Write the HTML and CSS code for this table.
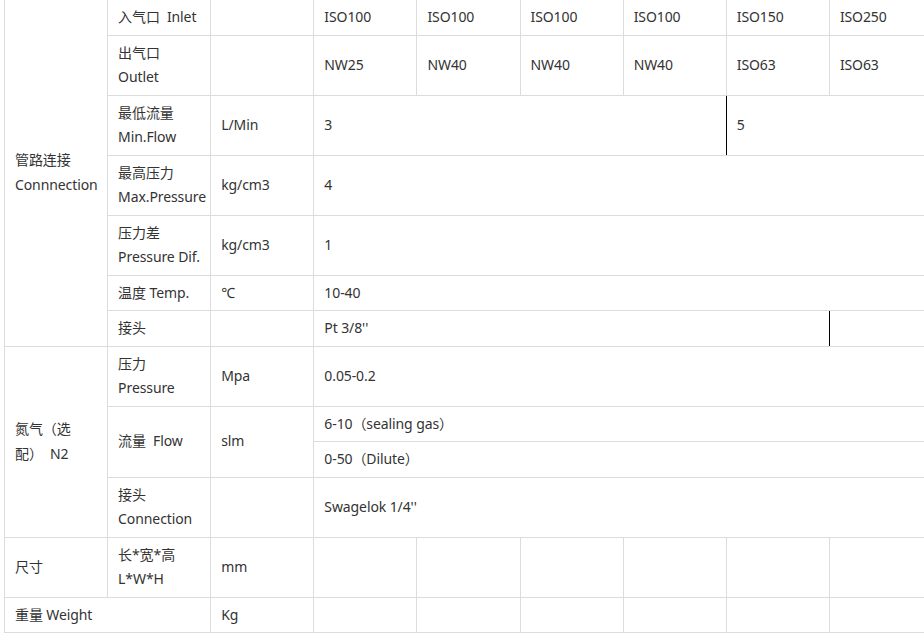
FILE: index.html
```html
<!DOCTYPE html>
<html lang="zh-CN">
<head>
<meta charset="utf-8">
<title>规格参数</title>
<link rel="stylesheet" href="styles.css">
</head>
<body>
<div class="wrap">
<table class="spec">
<tbody>
<tr>
<td rowspan="7" class="grp">管路连接<br>Connnection</td>
<td>入气口&nbsp; Inlet</td>
<td></td>
<td>ISO100</td>
<td>ISO100</td>
<td>ISO100</td>
<td>ISO100</td>
<td>ISO150</td>
<td>ISO250</td>
</tr>
<tr>
<td>出气口<br>Outlet</td>
<td></td>
<td>NW25</td>
<td>NW40</td>
<td>NW40</td>
<td>NW40</td>
<td>ISO63</td>
<td>ISO63</td>
</tr>
<tr>
<td>最低流量<br>Min.Flow</td>
<td>L/Min</td>
<td colspan="4" class="edge">3</td>
<td colspan="2">5</td>
</tr>
<tr>
<td>最高压力<br>Max.Pressure</td>
<td>kg/cm3</td>
<td colspan="6">4</td>
</tr>
<tr>
<td>压力差<br>Pressure Dif.</td>
<td>kg/cm3</td>
<td colspan="6">1</td>
</tr>
<tr>
<td>温度 Temp.</td>
<td>℃</td>
<td colspan="6">10-40</td>
</tr>
<tr>
<td>接头</td>
<td></td>
<td colspan="5" class="edge">Pt 3/8''</td>
<td></td>
</tr>
<tr>
<td rowspan="4" class="grp">氮气（选配）&nbsp; N2</td>
<td>压力<br>Pressure</td>
<td>Mpa</td>
<td colspan="6">0.05-0.2</td>
</tr>
<tr>
<td rowspan="2">流量&nbsp; Flow</td>
<td rowspan="2">slm</td>
<td colspan="6">6-10（sealing gas）</td>
</tr>
<tr>
<td colspan="6">0-50（Dilute）</td>
</tr>
<tr>
<td>接头<br>Connection</td>
<td></td>
<td colspan="6">Swagelok 1/4''</td>
</tr>
<tr>
<td class="grp">尺寸</td>
<td>长*宽*高<br>L*W*H</td>
<td>mm</td>
<td></td>
<td></td>
<td></td>
<td></td>
<td></td>
<td></td>
</tr>
<tr>
<td colspan="2">重量 Weight</td>
<td>Kg</td>
<td></td>
<td></td>
<td></td>
<td></td>
<td></td>
<td></td>
</tr>
</tbody>
</table>
</div>
</body>
</html>
```
FILE: styles.css
```css
html, body {
  margin: 0;
  padding: 0;
  background: #fff;
}

body {
  overflow: hidden;
  font-family: "Noto Sans", "Noto Sans CJK SC", sans-serif;
  font-size: 14px;
  color: #333;
}

.wrap {
  width: 100%;
  overflow: hidden;
  padding-left: 4px;
  margin-top: -1px;
  box-sizing: border-box;
}

.spec {
  width: 929px;
  table-layout: fixed;
  border-collapse: collapse;
  border-spacing: 0;
}

.spec td {
  border: 1px solid #dcdcdc;
  padding: 5px 4px 5px 10px;
  line-height: 24.5px;
  vertical-align: middle;
  text-align: left;
  letter-spacing: -0.1px;
}

.spec td.grp {
  padding-right: 10px;
}

.spec td.edge {
  border-right: 1px solid #000;
}
```
